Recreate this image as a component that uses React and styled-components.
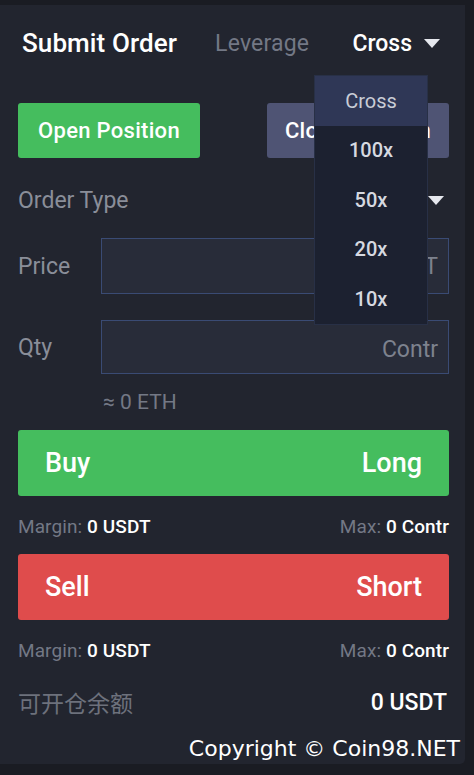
import React from 'react';
import styled, { createGlobalStyle } from 'styled-components';

const colors = {
  page: '#1a1c23',
  panel: '#22252f',
  white: '#ffffff',
  muted: '#8a8e99',
  dim: '#737885',
  green: '#45bd5e',
  red: '#df4c4c',
  slate: '#4f5474',
  inputBg: '#282c39',
  inputBorder: '#3a4b74',
  menuBg: '#1c2130',
  menuHead: '#2f3756',
};

const GlobalStyle = createGlobalStyle`
  html, body {
    margin: 0;
    padding: 0;
    background: ${colors.page};
    font-family: Roboto, "Noto Sans", "Noto Sans CJK SC", sans-serif;
  }
`;

const Panel = styled.div`
  width: 465px;
  height: 759px;
  margin-top: 5px;
  background: ${colors.panel};
  border-radius: 0 0 5px 0;
  display: flex;
  flex-direction: column;
  padding: 0 16px 0 18px;
  box-sizing: border-box;
`;

const Header = styled.div`
  height: 76px;
  display: flex;
  align-items: center;
  padding: 0 9px 0 4px;
`;

const Title = styled.div`
  font-size: 26px;
  font-weight: 500;
  color: ${colors.white};
  letter-spacing: 0.1px;
`;

const Leverage = styled.div`
  margin-left: 38px;
  font-size: 23px;
  letter-spacing: 0.2px;
  color: ${colors.dim};
  flex: 1;
`;

const Selector = styled.div`
  position: relative;
  display: flex;
  align-items: center;
  gap: 12px;
  font-size: 23px;
  font-weight: 500;
  color: ${colors.white};
`;

const Caret = styled.span`
  width: 0;
  height: 0;
  border-left: 8px solid transparent;
  border-right: 8px solid transparent;
  border-top: 9px solid ${(p) => p.$color || '#e6e8ee'};
`;

const Menu = styled.div`
  position: absolute;
  top: calc(100% + 18px);
  right: 12px;
  width: 114px;
  background: ${colors.menuBg};
  border: 1px solid #283046;
  box-sizing: border-box;
  z-index: 5;
`;

const MenuItem = styled.div`
  height: ${(p) => (p.$active ? '50px' : '49.5px')};
  display: flex;
  align-items: center;
  justify-content: center;
  font-size: 20px;
  font-weight: ${(p) => (p.$active ? 400 : 500)};
  color: ${(p) => (p.$active ? '#c9cdd6' : '#d6d9e0')};
  background: ${(p) => (p.$active ? colors.menuHead : 'transparent')};
`;

const Tabs = styled.div`
  margin-top: 22px;
  display: flex;
  justify-content: space-between;
`;

const TabButton = styled.div`
  width: 182px;
  height: 55px;
  border-radius: 3px;
  background: ${(p) => p.$bg};
  color: ${colors.white};
  font-size: 22px;
  font-weight: 500;
  letter-spacing: 0.3px;
  display: flex;
  align-items: center;
  justify-content: center;
`;

const TypeRow = styled.div`
  height: 44px;
  margin-top: 20px;
  display: flex;
  align-items: center;
  justify-content: space-between;
  padding-right: 5px;
  font-size: 23px;
  color: ${colors.muted};
`;

const FieldRow = styled.div`
  display: flex;
  align-items: center;
  margin-top: ${(p) => p.$top}px;
`;

const FieldLabel = styled.div`
  width: 83px;
  font-size: 23px;
  color: ${colors.muted};
`;

const Input = styled.div`
  flex: 1;
  height: ${(p) => p.$h}px;
  background: ${colors.inputBg};
  border: 1px solid ${colors.inputBorder};
  box-sizing: border-box;
  display: flex;
  align-items: center;
  justify-content: flex-end;
  padding: ${(p) => p.$pt || 0}px 10px 0;
  font-size: 23px;
  color: #7d828e;
`;

const Estimate = styled.div`
  margin: 16px 0 0 85px;
  font-size: 21px;
  color: ${colors.dim};
`;

const ActionButton = styled.div`
  height: 66px;
  margin-top: ${(p) => p.$top}px;
  border-radius: 3px;
  background: ${(p) => p.$bg};
  display: flex;
  align-items: center;
  justify-content: space-between;
  padding: 0 27px;
  font-size: 27px;
  font-weight: 500;
  color: ${colors.white};
`;

const InfoRow = styled.div`
  height: 28px;
  margin-top: 16px;
  display: flex;
  align-items: center;
  justify-content: space-between;
  font-size: 19px;
  letter-spacing: 0.1px;
  color: ${colors.dim};

  b {
    color: ${colors.white};
    font-weight: 500;
  }
`;

const BalanceRow = styled.div`
  margin-top: 21px;
  display: flex;
  align-items: center;
  justify-content: space-between;
  padding-right: 2px;
  font-size: 23px;
  color: #6d717c;

  b {
    color: ${colors.white};
    font-weight: 500;
  }
`;

const Copyright = styled.div`
  margin-top: 17px;
  align-self: flex-end;
  margin-right: -11px;
  font-family: "DejaVu Sans", sans-serif;
  font-size: 22px;
  color: ${colors.white};
`;

const leverageOptions = ['Cross', '100x', '50x', '20x', '10x'];

const App = () => {
  return (
    <>
      <GlobalStyle />
      <Panel>
        <Header>
          <Title>Submit Order</Title>
          <Leverage>Leverage</Leverage>
          <Selector>
            Cross
            <Caret />
            <Menu>
              {leverageOptions.map((opt, i) => (
                <MenuItem key={opt} $active={i === 0}>
                  {opt}
                </MenuItem>
              ))}
            </Menu>
          </Selector>
        </Header>

        <Tabs>
          <TabButton $bg={colors.green}>Open Position</TabButton>
          <TabButton $bg={colors.slate}>Close Position</TabButton>
        </Tabs>

        <TypeRow>
          <span>Order Type</span>
          <Caret $color="#e6e8ee" />
        </TypeRow>

        <FieldRow $top={16}>
          <FieldLabel>Price</FieldLabel>
          <Input $h={56}>USDT</Input>
        </FieldRow>

        <FieldRow $top={26}>
          <FieldLabel>Qty</FieldLabel>
          <Input $h={54} $pt={4}>Contr</Input>
        </FieldRow>

        <Estimate>≈ 0 ETH</Estimate>

        <ActionButton $bg={colors.green} $top={16}>
          <span>Buy</span>
          <span>Long</span>
        </ActionButton>
        <InfoRow>
          <span>Margin: <b>0 USDT</b></span>
          <span>Max: <b>0 Contr</b></span>
        </InfoRow>

        <ActionButton $bg={colors.red} $top={14}>
          <span>Sell</span>
          <span>Short</span>
        </ActionButton>
        <InfoRow>
          <span>Margin: <b>0 USDT</b></span>
          <span>Max: <b>0 Contr</b></span>
        </InfoRow>

        <BalanceRow>
          <span>可开仓余额</span>
          <b>0 USDT</b>
        </BalanceRow>

        <Copyright>Copyright © Coin98.NET</Copyright>
      </Panel>
    </>
  );
};

export default App;
